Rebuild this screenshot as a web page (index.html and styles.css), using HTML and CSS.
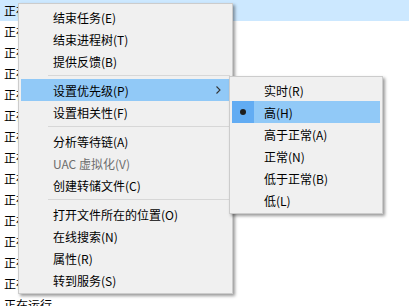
FILE: index.html
```html
<!DOCTYPE html>
<html lang="zh-CN">
<head>
  <meta charset="UTF-8" />
  <title>任务管理器 - 上下文菜单</title>
  <link rel="stylesheet" href="styles.css">
</head>
<body>
  <div class="list">
    <div class="row selected">正在运行</div>
    <div class="row">正在运行</div>
    <div class="row">正在运行</div>
    <div class="row">正在运行</div>
    <div class="row">正在运行</div>
    <div class="row">正在运行</div>
    <div class="row">正在运行</div>
    <div class="row">正在运行</div>
    <div class="row">正在运行</div>
    <div class="row">正在运行</div>
    <div class="row">正在运行</div>
    <div class="row">正在运行</div>
    <div class="row">正在运行</div>
    <div class="row">正在运行</div>
    <div class="row">正在运行</div>
  </div>

  <!-- Context menu -->
  <div class="menu main-menu">
    <div class="item">结束任务(E)</div>
    <div class="item">结束进程树(T)</div>
    <div class="item">提供反馈(B)</div>
    <div class="sep"></div>
    <div class="item hot">设置优先级(P)
      <svg class="arrow" width="5" height="8" viewBox="0 0 5 8">
        <path d="M0.5 0.5 L4 4 L0.5 7.5" fill="none" stroke="#333" stroke-width="1.1" />
      </svg>
    </div>
    <div class="item">设置相关性(F)</div>
    <div class="sep"></div>
    <div class="item">分析等待链(A)</div>
    <div class="item disabled">UAC 虚拟化(V)</div>
    <div class="item">创建转储文件(C)</div>
    <div class="sep"></div>
    <div class="item">打开文件所在的位置(O)</div>
    <div class="item">在线搜索(N)</div>
    <div class="item">属性(R)</div>
    <div class="item">转到服务(S)</div>
  </div>

  <!-- Priority submenu -->
  <div class="menu sub-menu">
    <div class="item">实时(R)</div>
    <div class="item hot checked"><span class="mark"><span class="dot"></span></span>高(H)</div>
    <div class="item">高于正常(A)</div>
    <div class="item">正常(N)</div>
    <div class="item">低于正常(B)</div>
    <div class="item">低(L)</div>
  </div>
</body>
</html>
```

FILE: styles.css
```css
* {
  box-sizing: border-box;
}

body {
  margin: 0;
  font-family: "Noto Sans CJK SC", "Microsoft YaHei", sans-serif;
  font-size: 12px;
  color: #000;
  background: #fff;
  overflow: hidden;
}

.list {
  width: 100%;
}

.row {
  height: 21px;
  line-height: 21px;
  padding-left: 4px;
  white-space: nowrap;
}

.row.selected {
  background: #cce8ff;
}

.menu {
  position: absolute;
  background: #f0f0f0;
  border: 1px solid #cccccc;
  padding: 2px;
  box-shadow: 2px 2px 3px rgba(0, 0, 0, 0.4);
}

.main-menu {
  left: 18px;
  top: 3px;
  width: 215px;
}

.sub-menu {
  left: 229px;
  top: 76px;
  width: 154px;
}

.item {
  display: flex;
  align-items: center;
  height: 22px;
  padding-left: 32px;
  white-space: nowrap;
}

.item.hot {
  background: #91c9f7;
}

.item.disabled {
  color: #6d6d6d;
}

.item.checked {
  padding-left: 0;
}

.mark {
  display: flex;
  align-items: center;
  justify-content: center;
  width: 22px;
  height: 100%;
  margin-right: 10px;
  background: #62acf3;
}

.dot {
  width: 6px;
  height: 6px;
  border-radius: 50%;
  background: #1e1e1e;
}

.arrow {
  margin-left: auto;
  margin-right: 9px;
}

.sep {
  height: 7px;
  padding-top: 3px;
  margin-left: 27px;
}

.sep::after {
  content: "";
  display: block;
  height: 1px;
  background: #d7d7d7;
}
```
